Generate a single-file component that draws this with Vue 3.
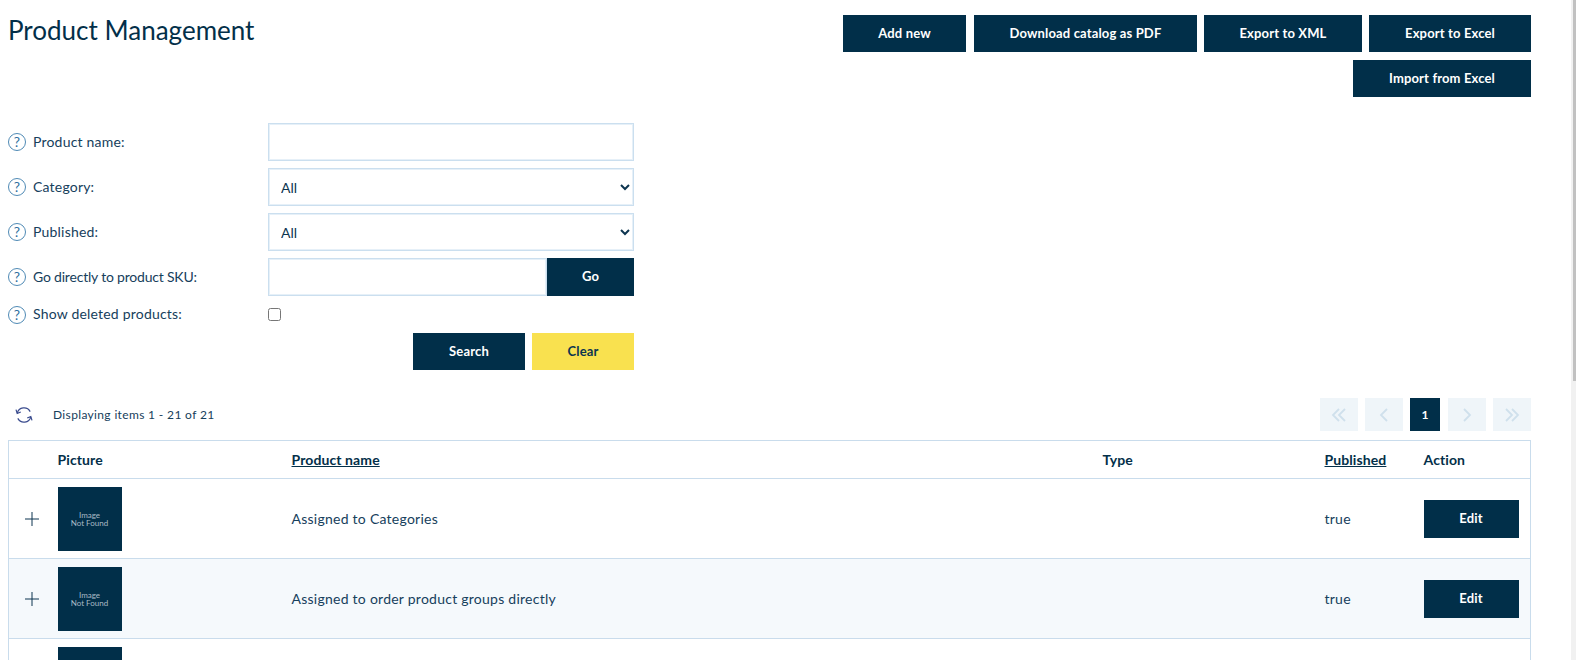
<script setup>
const actions = [
  { label: 'Add new', cls: 'w-add' },
  { label: 'Download catalog as PDF', cls: 'w-pdf' },
  { label: 'Export to XML', cls: 'w-xml' },
  { label: 'Export to Excel', cls: 'w-xls' },
  { label: 'Import from Excel', cls: 'w-imp' }
]
const products = [
  { name: 'Assigned to Categories', published: 'true' },
  { name: 'Assigned to order product groups directly', published: 'true' }
]
</script>

<template>
  <div class="shell">
    <main class="main">
      <header class="top">
        <h1 class="title">Product Management</h1>
        <div class="actions">
          <button v-for="a in actions" :key="a.label" class="btn" :class="a.cls">{{ a.label }}</button>
        </div>
      </header>

      <form class="form" @submit.prevent>
        <div class="row">
          <label class="lab"><span class="help">?</span><span class="txt">Product name:</span></label>
          <input class="field" type="text" />
        </div>
        <div class="row">
          <label class="lab"><span class="help">?</span><span class="txt">Category:</span></label>
          <select class="field sel"><option>All</option></select>
        </div>
        <div class="row">
          <label class="lab"><span class="help">?</span><span class="txt">Published:</span></label>
          <select class="field sel"><option>All</option></select>
        </div>
        <div class="row">
          <label class="lab"><span class="help">?</span><span class="txt tight">Go directly to product SKU:</span></label>
          <div class="go">
            <input class="field" type="text" />
            <button class="btn go-btn">Go</button>
          </div>
        </div>
        <div class="row check-row">
          <label class="lab"><span class="help">?</span><span class="txt">Show deleted products:</span></label>
          <input class="check" type="checkbox" />
        </div>
        <div class="form-btns">
          <button class="btn w-search">Search</button>
          <button class="btn clear">Clear</button>
        </div>
      </form>

      <div class="toolbar">
        <svg class="refresh" width="18" height="18" viewBox="0 0 18 18" fill="none" stroke="#3c4d8f" stroke-width="1.2">
          <path d="M2.2 7.2A7 7 0 0 1 15.2 5.6" />
          <path d="M15.8 10.8A7 7 0 0 1 2.8 12.4" />
          <path d="M1 3.6 2.2 7.4 5.8 6" />
          <path d="M17 14.4 15.8 10.6 12.2 12" />
        </svg>
        <span class="count">Displaying items 1 - 21 of 21</span>
        <nav class="pager">
          <span class="pg">
            <svg width="16" height="14" viewBox="0 0 16 14" fill="none" stroke="#cfe0ec" stroke-width="1.8"><path d="M8 1 2 7l6 6M14 1 8 7l6 6" /></svg>
          </span>
          <span class="pg">
            <svg width="10" height="14" viewBox="0 0 10 14" fill="none" stroke="#cfe0ec" stroke-width="1.8"><path d="M8 1 2 7l6 6" /></svg>
          </span>
          <span class="pg cur">1</span>
          <span class="pg">
            <svg width="10" height="14" viewBox="0 0 10 14" fill="none" stroke="#cfe0ec" stroke-width="1.8"><path d="m2 1 6 6-6 6" /></svg>
          </span>
          <span class="pg">
            <svg width="16" height="14" viewBox="0 0 16 14" fill="none" stroke="#cfe0ec" stroke-width="1.8"><path d="m2 1 6 6-6 6M8 1l6 6-6 6" /></svg>
          </span>
        </nav>
      </div>

      <table class="grid">
        <colgroup>
          <col class="c-exp" /><col class="c-pic" /><col /><col class="c-type" /><col class="c-pub" /><col class="c-act" />
        </colgroup>
        <thead>
          <tr>
            <th></th>
            <th>Picture</th>
            <th><a class="sort">Product name</a></th>
            <th>Type</th>
            <th><a class="sort">Published</a></th>
            <th>Action</th>
          </tr>
        </thead>
        <tbody>
          <tr v-for="(p, i) in products" :key="p.name" :class="{ alt: i % 2 === 1 }">
            <td class="exp">
              <svg width="14" height="14" viewBox="0 0 14 14" stroke="#0d3550" stroke-width="1" fill="none"><path d="M7 0v14M0 7h14" /></svg>
            </td>
            <td><div class="thumb"><span>Image<br />Not Found</span></div></td>
            <td class="cell-txt">{{ p.name }}</td>
            <td></td>
            <td class="cell-txt">{{ p.published }}</td>
            <td><button class="btn edit">Edit</button></td>
          </tr>
          <tr>
            <td class="exp"></td>
            <td><div class="thumb"></div></td>
            <td></td><td></td><td></td><td></td>
          </tr>
        </tbody>
      </table>
    </main>
    <aside class="scroll"><div class="thumb-bar"></div></aside>
  </div>
</template>

<style>
html, body { margin: 0; height: 100%; overflow: hidden; background: #fff; }
</style>

<style scoped>
.shell {
  display: flex;
  height: 660px;
  overflow: hidden;
  font-family: "Lato", "Noto Sans", sans-serif;
  color: #0d3550;
  font-size: 14px;
}
.main { flex: 1; min-width: 0; padding: 0 40px 0 8px; }
.scroll { width: 5px; background: #f1f1f1; display: flex; justify-content: flex-end; }
.thumb-bar { width: 3px; height: 381px; background: #c1c1c1; }

.top { display: flex; justify-content: space-between; padding-top: 15px; }
.title { margin: 0; font-size: 26px; font-weight: 400; line-height: 30px; color: #032f49; }
.actions { width: 690px; display: flex; flex-wrap: wrap; justify-content: flex-end; gap: 8px 7px; }

.btn {
  height: 37px;
  border: 0;
  padding: 0 0 2px;
  background: #012f49;
  color: #fff;
  font: 700 13px "Lato", "Noto Sans", sans-serif;
  letter-spacing: 0.15px;
}
.w-add { width: 123px; margin-right: 1px; }
.w-pdf { width: 223px; }
.w-xml { width: 158px; }
.w-xls { width: 162px; }
.w-imp { width: 178px; }

.form { width: 626px; margin-top: 26px; display: flex; flex-direction: column; gap: 7px; }
.row { display: grid; grid-template-columns: 260px 1fr; align-items: center; height: 38px; }
.check-row { height: 23px; }
.lab { display: flex; align-items: center; gap: 7px; color: #16405c; }
.txt { padding-bottom: 2px; letter-spacing: 0.2px; }
.txt.tight { letter-spacing: -0.2px; }
.help {
  box-sizing: border-box;
  width: 18px;
  height: 18px;
  border: 1.5px solid #4f8ab5;
  border-radius: 50%;
  display: flex;
  align-items: center;
  justify-content: center;
  font-size: 14px;
  line-height: 1;
  color: #2f6f9f;
}
.field {
  box-sizing: border-box;
  width: 100%;
  height: 38px;
  border: 1px solid #cbdfef;
  box-shadow: inset 0 0 0 1px #e6f0f8;
  border-radius: 0;
  background: #fff;
  padding: 0 10px;
  font: 14px "Lato", "Noto Sans", sans-serif;
  color: #0d3550;
  outline: none;
}
.sel { padding-left: 8px; }
.go { display: flex; }
.go .field { flex: 1; min-width: 0; }
.go-btn { width: 87px; height: 38px; flex: none; }
.check { width: 13px; height: 13px; margin: 0; }
.form-btns { display: flex; justify-content: flex-end; gap: 7px; }
.w-search { width: 112px; }
.clear { width: 102px; background: #f9e14f; color: #0d3550; }

.toolbar { display: flex; align-items: center; margin-top: 28px; height: 33px; }
.refresh { margin-left: 7px; }
.count { margin-left: 20px; font-size: 12px; letter-spacing: 0.35px; color: #16405c; }
.pager { margin-left: auto; display: flex; }
.pg {
  width: 38px;
  height: 33px;
  margin-left: 7px;
  background: #eff5f9;
  display: flex;
  align-items: center;
  justify-content: center;
}
.pg:first-child { margin-left: 0; }
.pg.cur { width: 30px; background: #012f49; color: #fff; font-size: 12px; font-weight: 700; }
.pg.cur + .pg { margin-left: 8px; }

.grid {
  width: 100%;
  margin-top: 9px;
  border-collapse: collapse;
  table-layout: fixed;
  border: 1px solid #c9dcec;
}
.c-exp { width: 41px; }
.c-pic { width: 234px; }
.c-type { width: 222px; }
.c-pub { width: 99px; }
.c-act { width: 115px; }
.grid th, .grid td { padding: 0 8px; text-align: left; border-bottom: 1px solid #c9dcec; }
.grid th { height: 37px; font-weight: 700; color: #032f49; letter-spacing: 0.1px; }
.grid td { height: 79px; color: #16405c; }
.grid .cell-txt { letter-spacing: 0.25px; }
.sort { text-decoration: underline; }
.alt td { background: #f5f9fc; }
.grid .exp { padding: 0 0 0 16px; }
.exp svg { display: block; }
.thumb {
  width: 64px;
  height: 64px;
  background: #012f49;
  color: #a9bac6;
  font-size: 8px;
  line-height: 8px;
  display: flex;
  align-items: center;
  justify-content: center;
  text-align: center;
}
.edit { width: 95px; height: 38px; display: block; }
</style>
